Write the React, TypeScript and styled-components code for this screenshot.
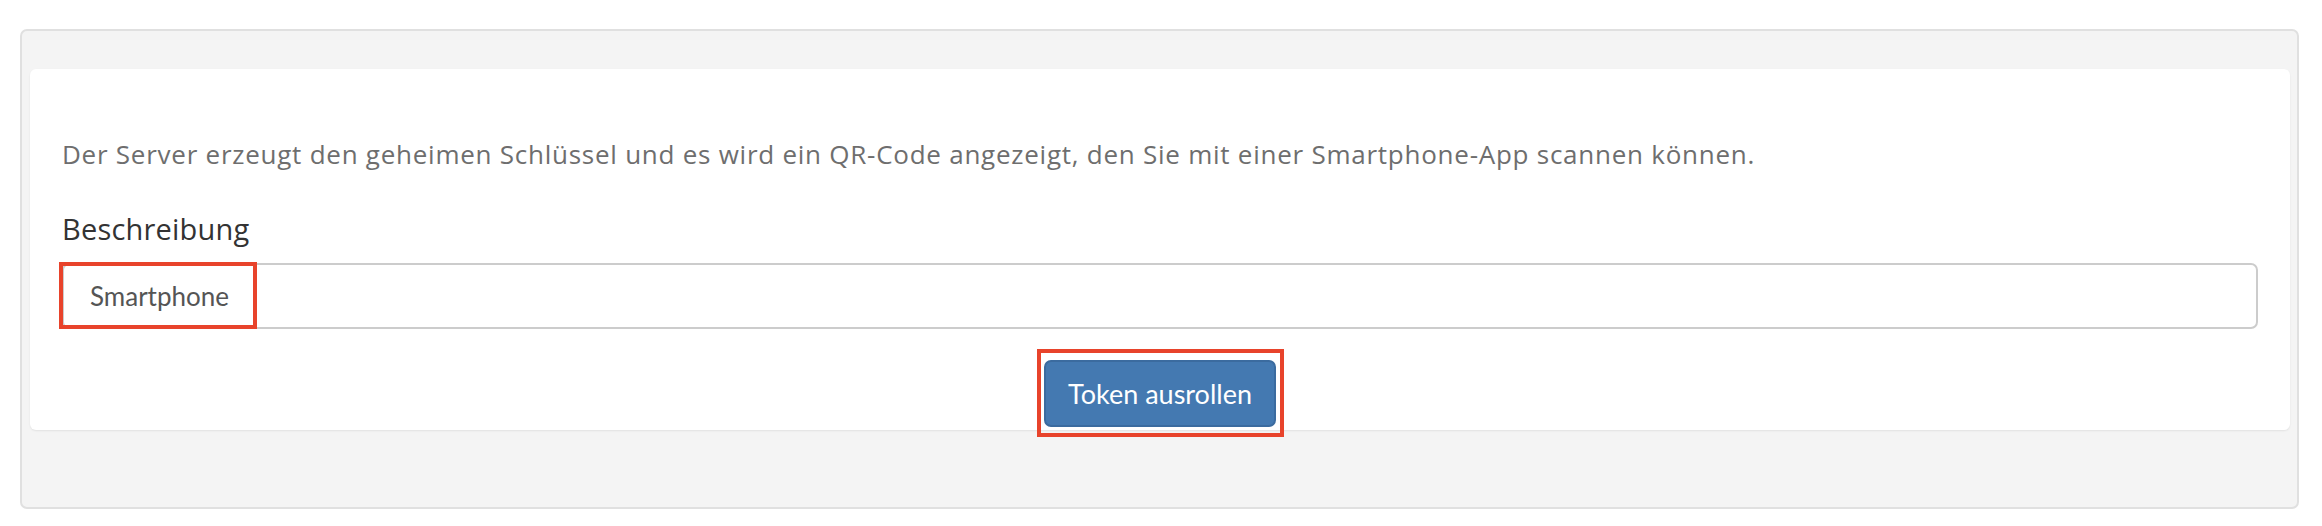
import React, { useState } from "react";
import styled, { createGlobalStyle } from "styled-components";

const GlobalStyle = createGlobalStyle`
  html, body {
    margin: 0;
    padding: 0;
    background: #ffffff;
    font-family: Lato, "Open Sans", sans-serif;
  }
`;

const Page = styled.div`
  padding: 29px 23px 17px 20px;
`;

const Panel = styled.div`
  background: #f4f4f4;
  border: 2px solid #e0e0e0;
  border-radius: 7px;
  padding: 38px 7px 77px 8px;
`;

const Card = styled.div`
  background: #ffffff;
  border-radius: 6px;
  box-shadow: 0 1px 2px rgba(0, 0, 0, 0.08);
  padding: 68px 32px 3px 32px;
  display: flex;
  flex-direction: column;
`;

const Intro = styled.p`
  margin: 0 0 40px 0;
  font-family: "Open Sans", Lato, sans-serif;
  font-size: 26px;
  letter-spacing: 0.75px;
  line-height: 35px;
  color: #6e6e6e;
  font-weight: 400;
`;

const Label = styled.label`
  display: block;
  font-family: "Open Sans", Lato, sans-serif;
  font-size: 29px;
  letter-spacing: 0.2px;
  line-height: 34px;
  color: #333333;
  margin-bottom: 17px;
`;

const Field = styled.div`
  position: relative;
`;

const Input = styled.input`
  box-sizing: border-box;
  width: 100%;
  height: 66px;
  border: 2px solid #cccccc;
  border-radius: 7px;
  padding: 0 26px;
  font-family: Lato, "Open Sans", sans-serif;
  font-size: 26px;
  color: #555555;
  background: #ffffff;
  outline: none;
`;

const Actions = styled.div`
  display: flex;
  justify-content: center;
  margin-top: 31px;
`;

const ButtonWrap = styled.div`
  position: relative;
`;

const Button = styled.button`
  box-sizing: border-box;
  height: 67px;
  width: 232px;
  background: #4479b1;
  border: 2px solid #3b6b9f;
  border-radius: 7px;
  color: #ffffff;
  font-family: Lato, "Open Sans", sans-serif;
  font-size: 27px;
  padding: 0;
  cursor: pointer;
`;

// red annotation boxes drawn over the screenshot
const Marker = styled.div<{ $top: number; $left: number; $w: number; $h: number }>`
  position: absolute;
  top: ${(p) => p.$top}px;
  left: ${(p) => p.$left}px;
  width: ${(p) => p.$w}px;
  height: ${(p) => p.$h}px;
  box-sizing: border-box;
  border: 4px solid #e8432b;
  pointer-events: none;
`;

const App = () => {
  const [description, setDescription] = useState("Smartphone");

  return (
    <>
      <GlobalStyle />
      <Page>
        <Panel>
          <Card>
            <Intro>
              Der Server erzeugt den geheimen Schlüssel und es wird ein QR-Code
              angezeigt, den Sie mit einer Smartphone-App scannen können.
            </Intro>
            <Label htmlFor="description">Beschreibung</Label>
            <Field>
              <Input
                id="description"
                value={description}
                onChange={(e) => setDescription(e.target.value)}
              />
              <Marker $top={-1} $left={-3} $w={198} $h={67} />
            </Field>
            <Actions>
              <ButtonWrap>
                <Button type="button">Token ausrollen</Button>
                <Marker $top={-11} $left={-7} $w={247} $h={88} />
              </ButtonWrap>
            </Actions>
          </Card>
        </Panel>
      </Page>
    </>
  );
};

export default App;
